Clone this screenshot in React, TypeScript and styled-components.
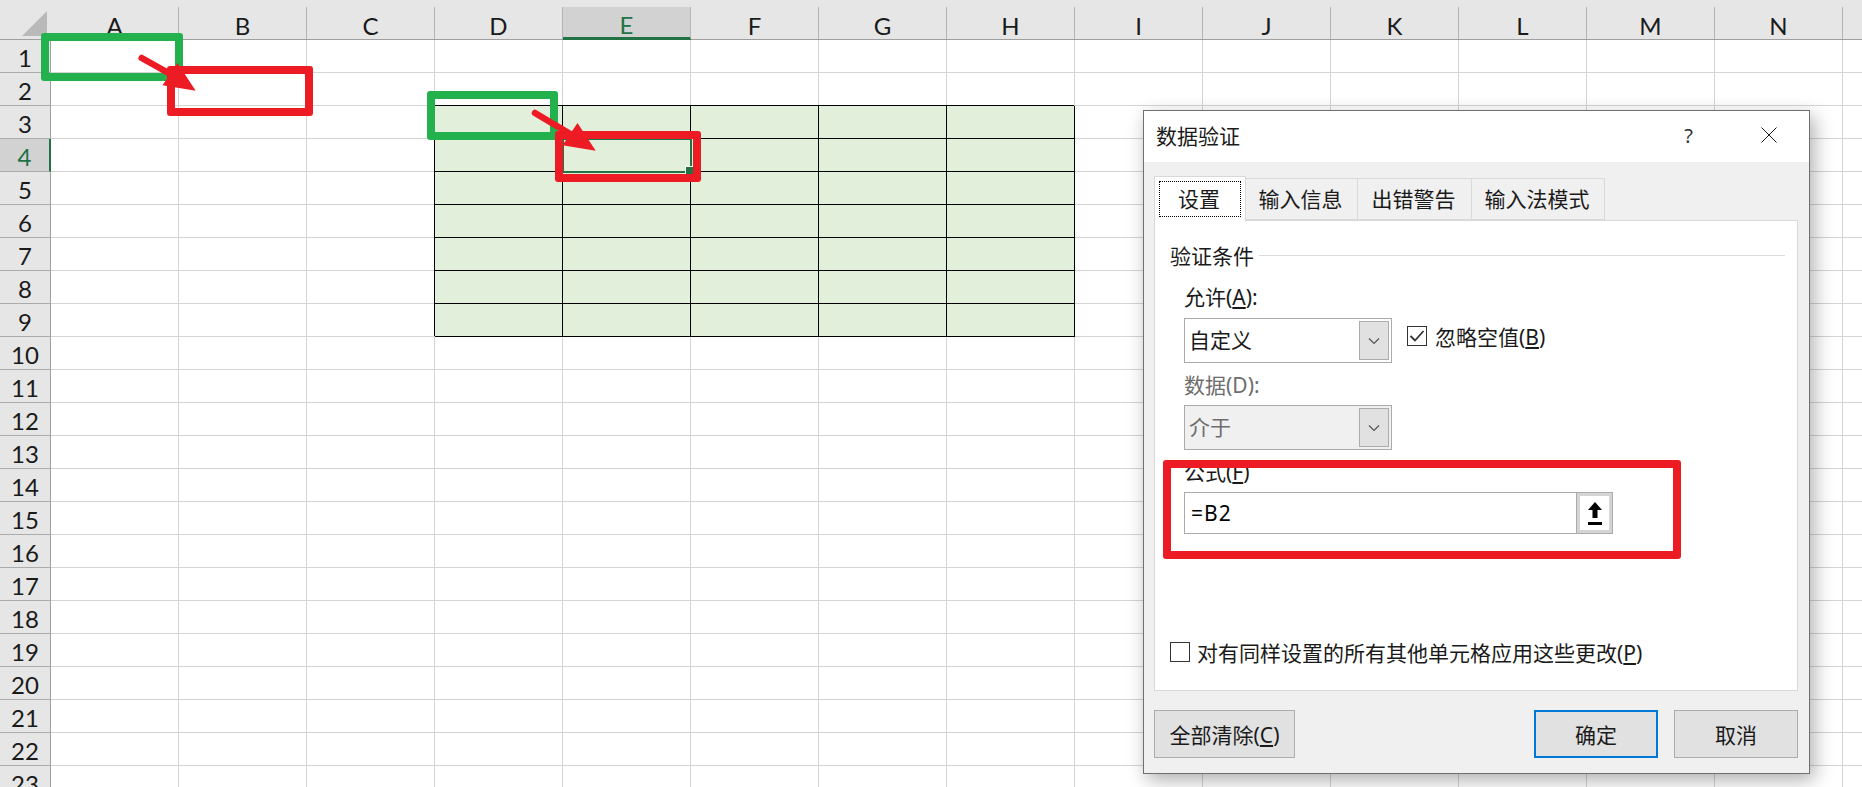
import styled, { createGlobalStyle } from "styled-components";

const GlobalStyle = createGlobalStyle`
  html, body {
    margin: 0;
    padding: 0;
    background: #fff;
    overflow: hidden;
  }
  * {
    box-sizing: border-box;
  }
`;

const UI_FONT = `"Noto Sans", "Noto Sans CJK SC", sans-serif`;

const Page = styled.div`
  position: relative;
  width: 1862px;
  height: 787px;
  overflow: hidden;
  background: #fff;
`;

/* sheet */
const HeaderRow = styled.div`
  display: flex;
  height: 40px;
  padding-top: 7px;
  background: #e6e6e6;
  border-bottom: 1px solid #9f9f9f;
`;

const Corner = styled.div`
  flex: 0 0 51px;
  margin-top: -7px;
  height: 39px;
  border-right: 1px solid #e6e6e6;
`;

const ColHead = styled.div<{ $active?: boolean }>`
  flex: 0 0 128px;
  height: ${(p) => (p.$active ? "33px" : "32px")};
  display: flex;
  align-items: center;
  justify-content: center;
  padding-top: ${(p) => (p.$active ? "4px" : "5px")};
  font: 400 24px Lato, sans-serif;
  color: ${(p) => (p.$active ? "#217346" : "#1a1a1a")};
  background: ${(p) => (p.$active ? "#d2d2d2" : "transparent")};
  border-right: 1px solid #b4b4b4;
  border-bottom: ${(p) => (p.$active ? "3px solid #217346" : "0")};
`;

const Row = styled.div`
  display: flex;
  height: 33px;
`;

const RowHead = styled.div<{ $active?: boolean }>`
  flex: 0 0 51px;
  display: flex;
  align-items: center;
  justify-content: center;
  padding-top: 2px;
  font: 400 24px Lato, sans-serif;
  color: ${(p) => (p.$active ? "#217346" : "#1a1a1a")};
  background: ${(p) => (p.$active ? "#d2d2d2" : "#e6e6e6")};
  border-right: ${(p) => (p.$active ? "2px solid #217346" : "1px solid #9f9f9f")};
  border-bottom: 1px solid #ababab;
`;

const Cell = styled.div<{ $table?: boolean; $selected?: boolean }>`
  position: ${(p) => (p.$selected ? "relative" : "static")};
  z-index: ${(p) => (p.$selected ? 1 : "auto")};
  flex: 0 0 128px;
  height: 33px;
  background: ${(p) => (p.$table ? "#e2efda" : "#fff")};
  border-right: 1px solid ${(p) => (p.$table ? "#000" : "#d4d4d4")};
  border-bottom: 1px solid ${(p) => (p.$table ? "#000" : "#d4d4d4")};
  box-shadow: ${(p) => (p.$table ? "-1px -1px 0 0 #000" : "none")};
`;

const Selection = styled.div`
  position: absolute;
  top: -1px;
  left: -1px;
  right: -2px;
  bottom: -2px;
  border: 2px solid #217346;
`;

const FillHandle = styled.div`
  position: absolute;
  right: -3px;
  bottom: -3px;
  width: 8px;
  height: 8px;
  background: #217346;
  border-left: 1px solid #fff;
  border-top: 1px solid #fff;
`;

/* dialog */
const Dialog = styled.div`
  position: absolute;
  z-index: 2;
  left: 1143px;
  top: 110px;
  width: 667px;
  height: 664px;
  display: flex;
  flex-direction: column;
  background: #f0f0f0;
  border: 1px solid #6f6f6f;
  box-shadow: 4px 6px 18px rgba(0, 0, 0, 0.32);
  font: 400 21px ${UI_FONT};
  color: #1a1a1a;
`;

const TitleBar = styled.div`
  flex: 0 0 51px;
  display: flex;
  align-items: center;
  padding: 0 32px 3px 12px;
  background: #fff;
`;

const Title = styled.div`
  flex: 1;
`;

const HelpMark = styled.span`
  margin-right: 68px;
  font-size: 20px;
  color: #333;
`;

const DialogBody = styled.div`
  flex: 1;
  display: flex;
  flex-direction: column;
  padding: 14px 11px 15px 10px;
`;

const TabStrip = styled.div`
  display: flex;
  align-items: flex-end;
  height: 44px;
`;

const Tab = styled.div<{ $width: number; $active?: boolean }>`
  position: relative;
  z-index: ${(p) => (p.$active ? 1 : 0)};
  width: ${(p) => p.$width}px;
  height: ${(p) => (p.$active ? "45px" : "42px")};
  margin-bottom: ${(p) => (p.$active ? "-1px" : "0")};
  display: flex;
  align-items: center;
  justify-content: center;
  padding: ${(p) => (p.$active ? "4px" : "0 2px 2px 0")};
  background: ${(p) => (p.$active ? "#fff" : "#f0f0f0")};
  border: 1px solid #d9d9d9;
  border-left-width: ${(p) => (p.$active ? "1px" : "0")};
  border-bottom: ${(p) => (p.$active ? "0" : "1px solid #d9d9d9")};
`;

const TabFocus = styled.div`
  flex: 1;
  height: 100%;
  display: flex;
  align-items: center;
  justify-content: center;
  padding: 0 2px 2px 0;
  border: 1px dotted #000;
`;

const Panel = styled.div`
  flex: 0 0 471px;
  display: flex;
  flex-direction: column;
  padding: 19px 12px 23px 15px;
  background: #fff;
  border: 1px solid #d9d9d9;
`;

const GroupHeading = styled.div`
  display: flex;
  align-items: center;
  gap: 5px;
  height: 30px;

  &::after {
    content: "";
    flex: 1;
    height: 1px;
    background: #dcdcdc;
  }
`;

const Indented = styled.div`
  display: flex;
  flex-direction: column;
  padding-left: 14px;
`;

const FieldLabel = styled.div<{ $height: number; $nudge?: number; $disabled?: boolean }>`
  height: ${(p) => p.$height}px;
  padding-top: ${(p) => p.$nudge ?? 0}px;
  display: flex;
  align-items: center;
  color: ${(p) => (p.$disabled ? "#6d6d6d" : "#1a1a1a")};
`;

const Key = styled.span`
  text-decoration: underline;
  text-underline-offset: 2px;
`;

const FieldRow = styled.div`
  display: flex;
  align-items: center;
  gap: 15px;
`;

const Select = styled.div<{ $disabled?: boolean }>`
  width: 208px;
  height: 45px;
  display: flex;
  align-items: stretch;
  padding: 2px;
  background: ${(p) => (p.$disabled ? "#f0f0f0" : "#fff")};
  border: 1px solid #ababab;
`;

const SelectValue = styled.div<{ $disabled?: boolean }>`
  flex: 1;
  display: flex;
  align-items: center;
  padding: 0 0 4px 2px;
  color: ${(p) => (p.$disabled ? "#6d6d6d" : "#1a1a1a")};
`;

const SelectButton = styled.div`
  flex: 0 0 30px;
  display: flex;
  align-items: center;
  justify-content: center;
  background: #e1e1e1;
  border: 1px solid #acacac;
`;

const CheckRow = styled.label`
  display: flex;
  align-items: center;
  gap: 8px;
`;

const SideCheck = styled(CheckRow)`
  margin-bottom: 10px;
`;

const CheckBox = styled.span`
  width: 20px;
  height: 20px;
  display: flex;
  align-items: center;
  justify-content: center;
  background: #fff;
  border: 1px solid #333;
`;

const FormulaInput = styled.div`
  width: 429px;
  height: 42px;
  display: flex;
  align-items: stretch;
  background: #fff;
  border: 1px solid #ababab;
`;

const FormulaText = styled.div`
  flex: 1;
  display: flex;
  align-items: center;
  padding-left: 6px;
  letter-spacing: 1px;
  color: #000;
`;

const RefButton = styled.div`
  flex: 0 0 37px;
  margin: -1px -1px -1px 0;
  display: flex;
  align-items: center;
  justify-content: center;
  background: #fff;
  border: 4px solid #d4d4d4;
  outline: 1px solid #ababab;
  outline-offset: -1px;
`;

const BottomCheck = styled(CheckRow)`
  margin-top: auto;
  gap: 7px;
`;

const ButtonRow = styled.div`
  display: flex;
  gap: 16px;
  margin-top: 19px;
`;

const Button = styled.div<{ $width: number; $primary?: boolean; $push?: boolean }>`
  width: ${(p) => p.$width}px;
  height: 48px;
  margin-left: ${(p) => (p.$push ? "auto" : "0")};
  display: flex;
  align-items: center;
  justify-content: center;
  background: #e1e1e1;
  border: ${(p) => (p.$primary ? "2px solid #0078d7" : "1px solid #adadad")};
`;

/* annotations drawn on top of the screenshot */
const Frame = styled.div<{ $color: string; $x: number; $y: number; $w: number; $h: number }>`
  position: absolute;
  z-index: 3;
  left: ${(p) => p.$x}px;
  top: ${(p) => p.$y}px;
  width: ${(p) => p.$w}px;
  height: ${(p) => p.$h}px;
  border: 8px solid ${(p) => p.$color};
  border-radius: 3px;
`;

const ArrowSvg = styled.svg<{ $x: number; $y: number }>`
  position: absolute;
  z-index: 3;
  left: ${(p) => p.$x}px;
  top: ${(p) => p.$y}px;
  overflow: visible;
`;

function Arrow({ x, y, tailX, tailY }: { x: number; y: number; tailX: number; tailY: number }) {
  return (
    <ArrowSvg $x={x} $y={y} width="70" height="50" viewBox="0 0 70 50">
      <line x1={tailX} y1={tailY} x2="42" y2="27" stroke="#ed1c24" strokeWidth="6.5" strokeLinecap="round" />
      <polygon points="65.7,42.7 32.5,37.2 47.5,15" fill="#ed1c24" />
    </ArrowSvg>
  );
}

const Chevron = () => (
  <svg width="12" height="8" viewBox="0 0 12 8">
    <polyline points="1,1.5 6,6.5 11,1.5" fill="none" stroke="#555" strokeWidth="1.2" />
  </svg>
);

const CheckMark = () => (
  <svg width="16" height="14" viewBox="0 0 16 14">
    <polyline points="1.5,7 6,11.5 14.5,2" fill="none" stroke="#333" strokeWidth="1.8" />
  </svg>
);

const UploadIcon = () => (
  <svg width="16" height="23" viewBox="0 0 16 23">
    <path d="M8 0 L15 8 L10.5 8 L10.5 16 L5.5 16 L5.5 8 L1 8 Z" fill="#000" />
    <rect x="1" y="20" width="14" height="3" fill="#000" />
  </svg>
);

const CloseIcon = () => (
  <svg width="16" height="16" viewBox="0 0 16 16">
    <path d="M0.5 0.5 L15.5 15.5 M15.5 0.5 L0.5 15.5" stroke="#1a1a1a" strokeWidth="1" fill="none" />
  </svg>
);

const COLUMNS = "ABCDEFGHIJKLMN".split("").concat("");
const ROWS = Array.from({ length: 23 }, (_, i) => i + 1);

export default function App() {
  return (
    <>
      <GlobalStyle />
      <Page>
        <HeaderRow>
          <Corner>
            <svg width="50" height="39" viewBox="0 0 50 39">
              <polygon points="22,36 47,11 47,36" fill="#b9b9b9" />
            </svg>
          </Corner>
          {COLUMNS.map((c, i) => (
            <ColHead key={i} $active={c === "E"}>
              {c}
            </ColHead>
          ))}
        </HeaderRow>
        {ROWS.map((r) => (
          <Row key={r}>
            <RowHead $active={r === 4}>{r}</RowHead>
            {COLUMNS.map((c, i) => {
              const inTable = r >= 3 && r <= 9 && i >= 3 && i <= 7;
              const selected = r === 4 && c === "E";
              return (
                <Cell key={i} $table={inTable} $selected={selected}>
                  {selected && (
                    <Selection>
                      <FillHandle />
                    </Selection>
                  )}
                </Cell>
              );
            })}
          </Row>
        ))}

        <Dialog>
          <TitleBar>
            <Title>数据验证</Title>
            <HelpMark>?</HelpMark>
            <CloseIcon />
          </TitleBar>
          <DialogBody>
            <TabStrip>
              <Tab $width={92} $active>
                <TabFocus>设置</TabFocus>
              </Tab>
              <Tab $width={112}>输入信息</Tab>
              <Tab $width={114}>出错警告</Tab>
              <Tab $width={133}>输入法模式</Tab>
            </TabStrip>
            <Panel>
              <GroupHeading>验证条件</GroupHeading>
              <Indented>
                <FieldLabel $height={48} $nudge={3}>
                  <span>
                    允许(<Key>A</Key>):
                  </span>
                </FieldLabel>
                <FieldRow>
                  <Select>
                    <SelectValue>自定义</SelectValue>
                    <SelectButton>
                      <Chevron />
                    </SelectButton>
                  </Select>
                  <SideCheck>
                    <CheckBox>
                      <CheckMark />
                    </CheckBox>
                    <span>
                      忽略空值(<Key>B</Key>)
                    </span>
                  </SideCheck>
                </FieldRow>
                <FieldLabel $height={42} $disabled>
                  数据(D):
                </FieldLabel>
                <Select $disabled>
                  <SelectValue $disabled>介于</SelectValue>
                  <SelectButton>
                    <Chevron />
                  </SelectButton>
                </Select>
                <FieldLabel $height={42}>
                  <span>
                    公式(<Key>F</Key>)
                  </span>
                </FieldLabel>
                <FormulaInput>
                  <FormulaText>=B2</FormulaText>
                  <RefButton>
                    <UploadIcon />
                  </RefButton>
                </FormulaInput>
              </Indented>
              <BottomCheck>
                <CheckBox />
                <span>
                  对有同样设置的所有其他单元格应用这些更改(<Key>P</Key>)
                </span>
              </BottomCheck>
            </Panel>
            <ButtonRow>
              <Button $width={141}>
                <span>
                  全部清除(<Key>C</Key>)
                </span>
              </Button>
              <Button $width={124} $primary $push>
                确定
              </Button>
              <Button $width={124}>取消</Button>
            </ButtonRow>
          </DialogBody>
        </Dialog>

        <Frame $color="#22b14c" $x={41} $y={33} $w={142} $h={48} />
        <Frame $color="#ed1c24" $x={167} $y={66} $w={146} $h={50} />
        <Arrow x={130} y={48} tailX={11.7} tailY={10} />

        <Frame $color="#22b14c" $x={427} $y={91} $w={131} $h={49} />
        <Frame $color="#ed1c24" $x={555} $y={131} $w={146} $h={51} />
        <Arrow x={530} y={108} tailX={5} tailY={5} />

        <Frame $color="#ed1c24" $x={1163} $y={460} $w={518} $h={99} />
      </Page>
    </>
  );
}
